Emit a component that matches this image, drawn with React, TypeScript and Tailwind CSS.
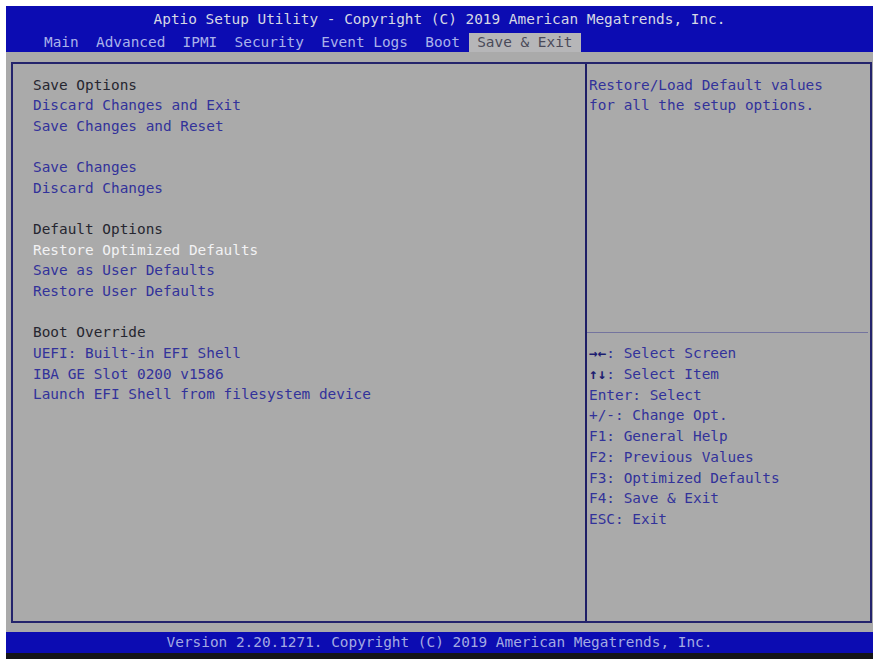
import React from "react";

type Row = { t: string; k: "h" | "i" | "s" | "b" };

const leftRows: Row[] = [
  { t: "Save Options", k: "h" },
  { t: "Discard Changes and Exit", k: "i" },
  { t: "Save Changes and Reset", k: "i" },
  { t: "", k: "b" },
  { t: "Save Changes", k: "i" },
  { t: "Discard Changes", k: "i" },
  { t: "", k: "b" },
  { t: "Default Options", k: "h" },
  { t: "Restore Optimized Defaults", k: "s" },
  { t: "Save as User Defaults", k: "i" },
  { t: "Restore User Defaults", k: "i" },
  { t: "", k: "b" },
  { t: "Boot Override", k: "h" },
  { t: "UEFI: Built-in EFI Shell", k: "i" },
  { t: "IBA GE Slot 0200 v1586", k: "i" },
  { t: "Launch EFI Shell from filesystem device", k: "i" },
];

const helpRows: { a?: string; t: string }[] = [
  { a: "\u2192\u2190", t: ": Select Screen" },
  { a: "\u2191\u2193", t: ": Select Item" },
  { t: "Enter: Select" },
  { t: "+/-: Change Opt." },
  { t: "F1: General Help" },
  { t: "F2: Previous Values" },
  { t: "F3: Optimized Defaults" },
  { t: "F4: Save & Exit" },
  { t: "ESC: Exit" },
];

function rowClass(k: Row["k"]) {
  if (k === "h") return "text-[#262630]";
  if (k === "s") return "text-[#f2f2f4]";
  return "text-[#32329a]";
}

export default function App() {
  return (
    <div className="w-[873px] h-[659px] bg-white pt-[6px] pl-[6px] overflow-hidden font-['DejaVu_Sans_Mono',monospace] text-[14.4px]">
      <div className="flex flex-col w-[867px] h-[653px]">
        {/* Header */}
        <div className="bg-[#0c0cb2] h-[46px] flex flex-col">
          <div className="h-[27px] leading-[27px] text-center text-[#d6d8e4] whitespace-pre">
            Aptio Setup Utility - Copyright (C) 2019 American Megatrends, Inc.
          </div>
          <div className="h-[19px] leading-[19px] pl-[38px] text-[#aab2ea] whitespace-pre flex">
            <span>Main  Advanced  IPMI  Security  Event Logs  Boot </span>
            <span className="bg-[#b6b6b8] text-[#4a4a58]"> Save &amp; Exit </span>
          </div>
        </div>

        {/* Body */}
        <div className="bg-[#aaaaaa] h-[580px] pt-[10px] pl-[5px] pr-[1px]">
          <div className="h-[561px] border-2 border-[#24246c] flex">
            {/* Left column */}
            <div className="w-[572px] pt-[10.5px] pl-[20px]">
              {leftRows.map((r, i) => (
                <div
                  key={i}
                  className={`h-[20.67px] leading-[20.67px] whitespace-pre ${rowClass(r.k)}`}
                >
                  {r.t}
                </div>
              ))}
            </div>
            {/* Right column */}
            <div className="flex-1 border-l-2 border-[#1e1e66] flex flex-col">
              <div className="h-[268px] pt-[10.5px] pl-[2px] text-[#32329a]">
                <div className="h-[20.67px] leading-[20.67px] whitespace-pre">Restore/Load Default values</div>
                <div className="h-[20.67px] leading-[20.67px] whitespace-pre">for all the setup options.</div>
              </div>
              <div className="h-[1px] bg-[#74749e] mr-[2px]" />
              <div className="pt-[10px] pl-[2px] text-[#32329a]">
                {helpRows.map((r, i) => (
                  <div key={i} className="h-[20.75px] leading-[20.75px] whitespace-pre">
                    {r.a && <span className="font-bold text-[#1c1c70]">{r.a}</span>}
                    {r.t}
                  </div>
                ))}
              </div>
            </div>
          </div>
        </div>

        {/* Footer */}
        <div className="bg-[#0c0cb2] h-[21px] leading-[21px] text-center text-[#a4aae2] whitespace-pre">
          Version 2.20.1271. Copyright (C) 2019 American Megatrends, Inc.
        </div>
        <div className="bg-[#141418] flex-1" />
      </div>
    </div>
  );
}
